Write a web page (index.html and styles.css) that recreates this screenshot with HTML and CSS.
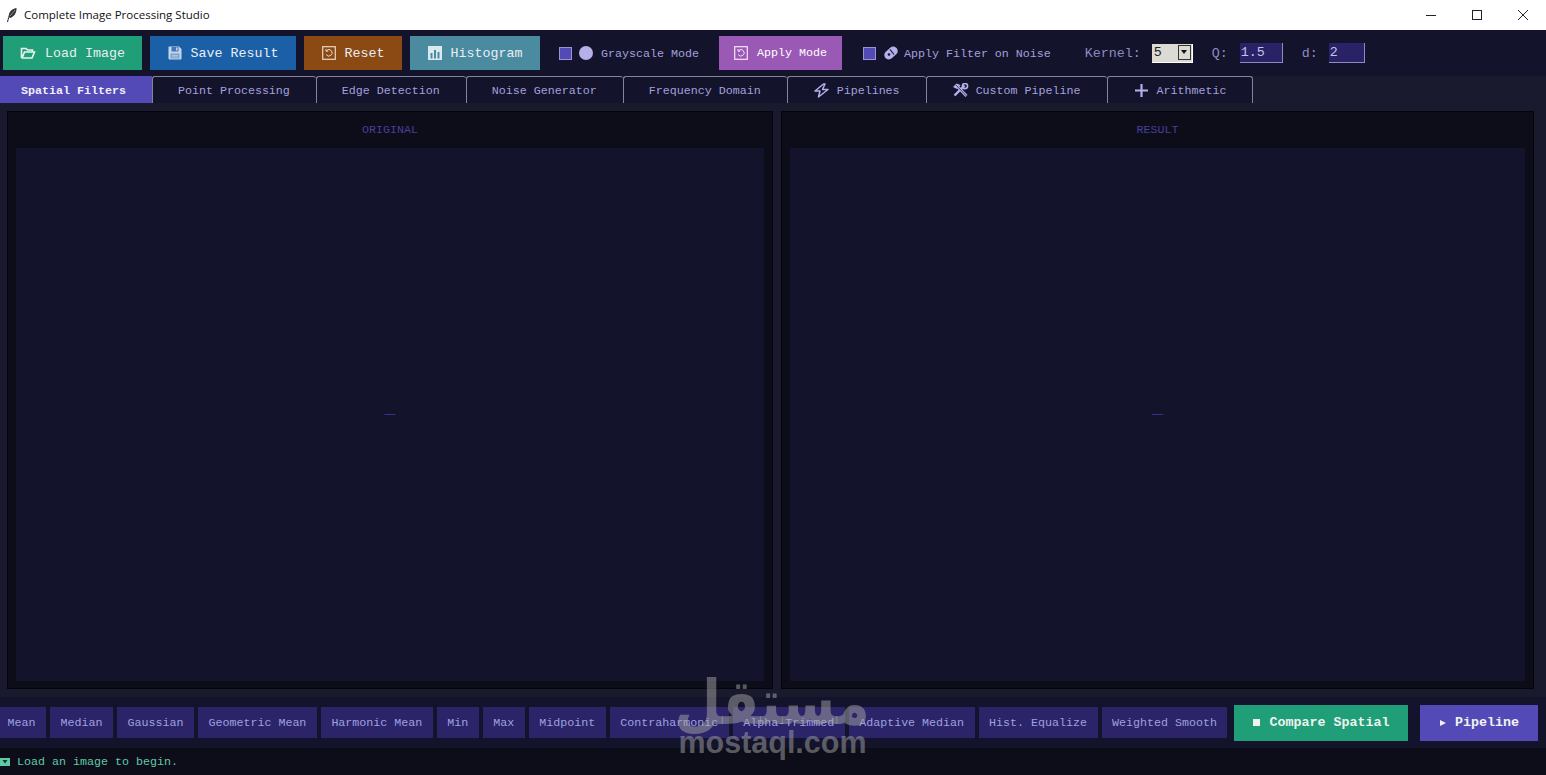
FILE: index.html
```html
<!DOCTYPE html>
<html>
<head>
  <title>Complete Image Processing Studio</title>
  <link rel="stylesheet" href="styles.css">
</head>
<body>
  <div class="app">
    <!-- window title bar -->
    <div class="titlebar">
      <svg class="feather" width="12" height="16" viewBox="0 0 12 16"><path d="M1.5 15 C2.5 11 3 9 4 7" stroke="#222" stroke-width="1" fill="none"/><path d="M3 10 C2 6 5 2 10.5 1 C11 5 8 10 4 11 Z" fill="#333"/><path d="M4 9 L9 3" stroke="#bbb" stroke-width="0.7"/></svg>
      <span class="title-text">Complete Image Processing Studio</span>
      <div class="win-buttons">
        <div class="win-btn"><svg width="12" height="12" viewBox="0 0 12 12"><path d="M1 6.5 H11" stroke="#222" stroke-width="1"/></svg></div>
        <div class="win-btn"><svg width="12" height="12" viewBox="0 0 12 12"><rect x="1.5" y="1.5" width="9" height="9" fill="none" stroke="#222"/></svg></div>
        <div class="win-btn"><svg width="12" height="12" viewBox="0 0 12 12"><path d="M1 1 L11 11 M11 1 L1 11" stroke="#222" stroke-width="1"/></svg></div>
      </div>
    </div>

    <!-- main toolbar -->
    <div class="toolbar">
      <button class="tool-btn btn-load">
        <svg class="icon" width="16" height="14" viewBox="0 0 16 14"><path d="M1.5 12 V2.5 H6 L7.5 4 H12.5 V6 M1.5 12 H12 L14.5 6 H4.5 L2.5 11" fill="none" stroke="#e8f5ef" stroke-width="1.6"/></svg>
        Load Image
      </button>
      <button class="tool-btn btn-save">
        <svg class="icon" width="14" height="14" viewBox="0 0 14 14"><path d="M1.5 0.5 H11 L13.5 3 V12.5 Q13.5 13.5 12.5 13.5 H1.5 Q0.5 13.5 0.5 12.5 V1.5 Q0.5 0.5 1.5 0.5 Z" fill="#c3d6ec"/><rect x="3.5" y="1" width="7" height="4.5" fill="#3f78b8"/><rect x="8" y="1.5" width="1.5" height="3" fill="#c3d6ec"/><rect x="2.5" y="7.5" width="9" height="5" fill="#7d9fc9"/><path d="M4 9.5 H10 M4 11 H10" stroke="#c3d6ec" stroke-width="0.7"/></svg>
        Save Result
      </button>
      <button class="tool-btn btn-reset">
        <svg class="icon" width="14" height="14" viewBox="0 0 14 14"><rect x="0.7" y="0.7" width="12.6" height="12.6" fill="none" stroke="#e9d6c4" stroke-width="1.2"/><path d="M4.2 8.5 A3.2 3.2 0 1 0 4.6 4.6 M4 3 V5.2 H6.2" fill="none" stroke="#e9d6c4" stroke-width="1"/></svg>
        Reset
      </button>
      <button class="tool-btn btn-hist">
        <svg class="icon" width="14" height="14" viewBox="0 0 14 14"><rect width="14" height="14" fill="#dbe8ee"/><rect x="2.5" y="7" width="2" height="5.5" fill="#4a8b9f"/><rect x="6" y="4" width="2" height="8.5" fill="#4a8b9f"/><rect x="9.5" y="6" width="2" height="6.5" fill="#4a8b9f"/></svg>
        Histogram
      </button>

      <label class="check gray-check">
        <span class="check-box"></span>
        <span class="dot"></span>
        <span class="check-text">Grayscale Mode</span>
      </label>

      <button class="tool-btn btn-apply">
        <svg class="icon" width="14" height="14" viewBox="0 0 14 14"><rect x="0.7" y="0.7" width="12.6" height="12.6" fill="none" stroke="#f3e6f8" stroke-width="1.2"/><path d="M4.2 8.5 A3.2 3.2 0 1 0 4.6 4.6 M4 3 V5.2 H6.2" fill="none" stroke="#f3e6f8" stroke-width="1"/></svg>
        Apply Mode
      </button>

      <label class="check noise-check">
        <span class="check-box"></span>
        <svg class="pill" width="16" height="16" viewBox="0 0 16 16"><rect x="0.5" y="3.5" width="15" height="9" rx="4.5" transform="rotate(-42 8 8)" fill="#b5b0ea"/><path d="M7 4.5 L11 9.5" stroke="#14142c" stroke-width="1.2"/><circle cx="6" cy="9.5" r="1.3" fill="#14142c"/></svg>
        <span class="check-text">Apply Filter on Noise</span>
      </label>

      <span class="field-label kernel-label">Kernel:</span>
      <div class="combo">
        <span class="combo-value">5</span>
        <span class="combo-arrow"></span>
      </div>
      <span class="field-label q-label">Q:</span>
      <input class="num-input q-input" type="text" value="1.5">
      <span class="field-label d-label">d:</span>
      <input class="num-input d-input" type="text" value="2">
    </div>

    <!-- tabs -->
    <div class="tabs">
      <div class="tab tab-active">Spatial Filters</div>
      <div class="tab">Point Processing</div>
      <div class="tab">Edge Detection</div>
      <div class="tab">Noise Generator</div>
      <div class="tab">Frequency Domain</div>
      <div class="tab">
        <svg class="tab-icon" width="17" height="15" viewBox="0 0 17 15"><path d="M10.5 1 L2 8 H7 L5.5 14 L15 6.5 H9.5 L12 1 Z" fill="none" stroke="#b5b0ea" stroke-width="1.5" stroke-linejoin="round"/></svg>
        Pipelines
      </div>
      <div class="tab">
        <svg class="tab-icon" width="17" height="15" viewBox="0 0 17 15"><path d="M4 2 L14.5 13" stroke="#b5b0ea" stroke-width="3"/><path d="M12.5 2.5 L2.5 12.5" stroke="#b5b0ea" stroke-width="2.4"/><path d="M1 4 L4.5 0.5 L8.5 2 L5 6 Z" fill="#b5b0ea"/><circle cx="13" cy="3" r="2.6" fill="none" stroke="#b5b0ea" stroke-width="1.6"/><path d="M4 2 L14.5 13" stroke="#14142c" stroke-width="0.7"/></svg>
        Custom Pipeline
      </div>
      <div class="tab">
        <svg class="tab-icon" width="17" height="15" viewBox="0 0 17 15"><path d="M8.5 1 V14 M2 7.5 H15" stroke="#b5b0ea" stroke-width="2.2"/></svg>
        Arithmetic
      </div>
    </div>

    <!-- image panels -->
    <div class="workspace">
      <div class="panel panel-left">
        <div class="panel-title">ORIGINAL</div>
        <div class="canvas">—</div>
      </div>
      <div class="panel panel-right">
        <div class="panel-title">RESULT</div>
        <div class="canvas">—</div>
      </div>
    </div>

    <!-- filter buttons -->
    <div class="filters">
      <button class="filter-btn">Mean</button>
      <button class="filter-btn">Median</button>
      <button class="filter-btn">Gaussian</button>
      <button class="filter-btn">Geometric Mean</button>
      <button class="filter-btn">Harmonic Mean</button>
      <button class="filter-btn">Min</button>
      <button class="filter-btn">Max</button>
      <button class="filter-btn">Midpoint</button>
      <button class="filter-btn">Contraharmonic</button>
      <button class="filter-btn">Alpha-Trimmed</button>
      <button class="filter-btn">Adaptive Median</button>
      <button class="filter-btn">Hist. Equalize</button>
      <button class="filter-btn">Weighted Smooth</button>
      <button class="action-btn btn-compare"><span class="mini-square"></span>Compare Spatial</button>
      <button class="action-btn btn-pipeline"><span class="mini-play"></span>Pipeline</button>
    </div>

    <!-- status line -->
    <div class="status">
      <svg class="status-icon" width="10" height="9" viewBox="0 0 10 9"><rect y="1" width="10" height="8" fill="#5dcaa5"/><path d="M2.5 3 H7.5 L5 6.5 Z" fill="#14342c"/></svg>
      <span class="status-text">Load an image to begin.</span>
    </div>

    <div class="watermark">
      <div class="wm-arabic" lang="ar" dir="rtl">مستقل</div>
      <div class="wm-latin">mostaql.com</div>
    </div>
  </div>
</body>
</html>
```

FILE: styles.css
```css
body {
  margin: 0;
  font-family: "Liberation Mono", monospace;
  font-size: 11.67px;
  background-color: #1a1a2e;
}

button {
  font-family: "Liberation Mono", monospace;
  border: none;
  padding: 0;
  cursor: pointer;
}

.app {
  position: relative;
  display: flex;
  flex-direction: column;
  height: 775px;
  overflow: hidden;
}

/* title bar */
.titlebar {
  display: flex;
  align-items: center;
  height: 30px;
  flex-shrink: 0;
  background-color: #fff;
  padding-left: 6px;
}

.feather {
  margin-right: 6px;
}

.title-text {
  margin-bottom: 1px;
  font-family: "Open Sans", sans-serif;
  font-size: 11.5px;
  color: #111;
}

.win-buttons {
  display: flex;
  margin-left: auto;
}

.win-btn {
  display: flex;
  align-items: center;
  justify-content: center;
  width: 46px;
  height: 30px;
}

/* toolbar */
.toolbar {
  display: flex;
  align-items: center;
  gap: 8px;
  height: 46px;
  flex-shrink: 0;
  padding-left: 3px;
  background-color: #13132b;
  color: #a5a0dc;
}

.tool-btn {
  display: flex;
  align-items: center;
  justify-content: center;
  height: 34px;
  color: #e8eef5;
  font-size: 13.33px;
}

.tool-btn .icon {
  margin-right: 9px;
}

.btn-load { width: 139px; background-color: #1f9e77; }
.btn-save { width: 146px; background-color: #1b5fa6; }
.btn-reset { width: 98px; background-color: #8b4a14; }
.btn-hist { width: 130px; background-color: #4a8b9f; }

.btn-apply {
  width: 123px;
  margin-left: 12px;
  font-size: 11.67px;
  color: #fff;
  background-color: #9b59b6;
}

.check {
  display: flex;
  align-items: center;
}

.check-text {
  padding-top: 1px;
}

.gray-check { margin-left: 11px; }
.noise-check { margin-left: 13px; }

.check-box {
  width: 11px;
  height: 11px;
  background-color: #534ab7;
  border: 1px solid #9a96cc;
  margin-right: 7px;
}

.dot {
  width: 14px;
  height: 14px;
  border-radius: 50%;
  background-color: #b5b0ea;
  margin-right: 8px;
}

.pill {
  margin-right: 5px;
}

.field-label {
  font-size: 13.33px;
  color: #8f8bc0;
}

.kernel-label { margin-left: 26px; }
.q-label { margin-left: 11px; }
.d-label { margin-left: 11px; }

.combo {
  display: flex;
  align-items: center;
  justify-content: space-between;
  box-sizing: border-box;
  width: 41px;
  height: 19px;
  margin-left: 3px;
  padding: 0 1px 0 2px;
  font-size: 13.33px;
  background-color: #dcdad5;
  border-right: 1px solid #fff;
  border-bottom: 1px solid #fff;
  color: #222;
}

.combo-arrow {
  position: relative;
  box-sizing: border-box;
  width: 13px;
  height: 15px;
  background-color: #dcdad5;
  border: 1px solid #333;
}

.combo-arrow::after {
  content: "";
  position: absolute;
  left: 2px;
  top: 4px;
  border-left: 3.5px solid transparent;
  border-right: 3.5px solid transparent;
  border-top: 4px solid #111;
}

.num-input {
  box-sizing: border-box;
  height: 20px;
  padding: 0 0 0 1px;
  margin-left: 4px;
  font-family: "Liberation Mono", monospace;
  font-size: 13.33px;
  color: #c5c1f0;
  background-color: #2a2266;
  border: none;
  border-right: 1px solid #8f8bc0;
  border-bottom: 1px solid #8f8bc0;
  outline: none;
}

.q-input { width: 43px; }
.d-input { width: 36px; margin-left: 3px; }

/* tabs */
.tabs {
  display: flex;
  height: 27px;
  flex-shrink: 0;
  background-color: #1a1a2e;
}

.tab {
  display: flex;
  align-items: center;
  box-sizing: border-box;
  height: 27px;
  padding: 1px 26px 0 25px;
  background-color: #13132b;
  color: #a5a0dc;
  border-top: 1px solid #85859a;
  border-left: 1px solid #85859a;
  border-top-left-radius: 3px;
  border-top-right-radius: 3px;
  white-space: nowrap;
}

.tab:last-child {
  padding-right: 25px;
  border-right: 1px solid #85859a;
}

.tab-active {
  padding: 2px 26px 0 21px;
  background-color: #534ab7;
  color: #f0effa;
  font-weight: bold;
  border: none;
  border-radius: 0;
}

.tab-icon {
  margin-right: 7px;
}

/* image panels */
.workspace {
  display: flex;
  gap: 8px;
  flex: 1;
  min-height: 0;
  padding: 8px 12px 8px 7px;
}

.panel {
  display: flex;
  flex-direction: column;
  box-sizing: border-box;
  padding: 0 8px 7px;
  background-color: #0d0d1a;
  border: 1px solid #050509;
}

.panel-left { width: 766px; }
.panel-right { width: 753px; }

.panel-title {
  height: 36px;
  line-height: 37px;
  flex-shrink: 0;
  text-align: center;
  font-size: 11.67px;
  color: #453f99;
}

.canvas {
  display: flex;
  align-items: center;
  justify-content: center;
  flex: 1;
  box-sizing: border-box;
  padding-bottom: 4px;
  font-family: "Liberation Sans", sans-serif;
  font-size: 11px;
  background-color: #13132b;
  color: #4038a0;
}

/* bottom filter row */
.filters {
  display: flex;
  align-items: center;
  gap: 4px;
  height: 51px;
  flex-shrink: 0;
  margin-left: -3px;
  background-color: #13132b;
}

.filter-btn {
  height: 31px;
  padding: 0 10.5px;
  font-size: 11.67px;
  color: #a0a0e0;
  background-color: #2b2468;
  white-space: nowrap;
}

.action-btn {
  display: flex;
  align-items: center;
  justify-content: center;
  height: 36px;
  font-size: 13.33px;
  font-weight: bold;
  color: #eef3f0;
}

.btn-compare {
  width: 174px;
  margin-left: 3px;
  background-color: #1f9e77;
}

.btn-pipeline {
  width: 118px;
  margin-left: 8px;
  background-color: #534ab7;
}

.mini-square {
  width: 7px;
  height: 7px;
  margin-right: 9px;
  background-color: #eef3f0;
}

.mini-play {
  width: 0;
  height: 0;
  margin-right: 9px;
  border-left: 6px solid #eef3f0;
  border-top: 3.5px solid transparent;
  border-bottom: 3.5px solid transparent;
}

/* status */
.status {
  display: flex;
  align-items: center;
  height: 27px;
  flex-shrink: 0;
  background-color: #0d0d1a;
  color: #5dcaa5;
}

.status-icon {
  margin-right: 7px;
}

.status-text {
  padding-top: 1px;
}

/* site watermark over the picture */
.watermark {
  position: absolute;
  left: 679px;
  top: 662px;
  width: 205px;
  text-align: center;
  color: rgba(165, 165, 165, 0.5);
  pointer-events: none;
}

.wm-arabic {
  height: 66px;
  font-family: "DejaVu Sans", sans-serif;
  font-weight: bold;
  font-size: 62px;
  line-height: 82px;
  white-space: nowrap;
  transform: scaleX(0.86);
}

.wm-latin {
  margin-left: -18px;
  font-family: "Liberation Sans", sans-serif;
  font-weight: bold;
  font-size: 30.5px;
  line-height: 28px;
}
```
